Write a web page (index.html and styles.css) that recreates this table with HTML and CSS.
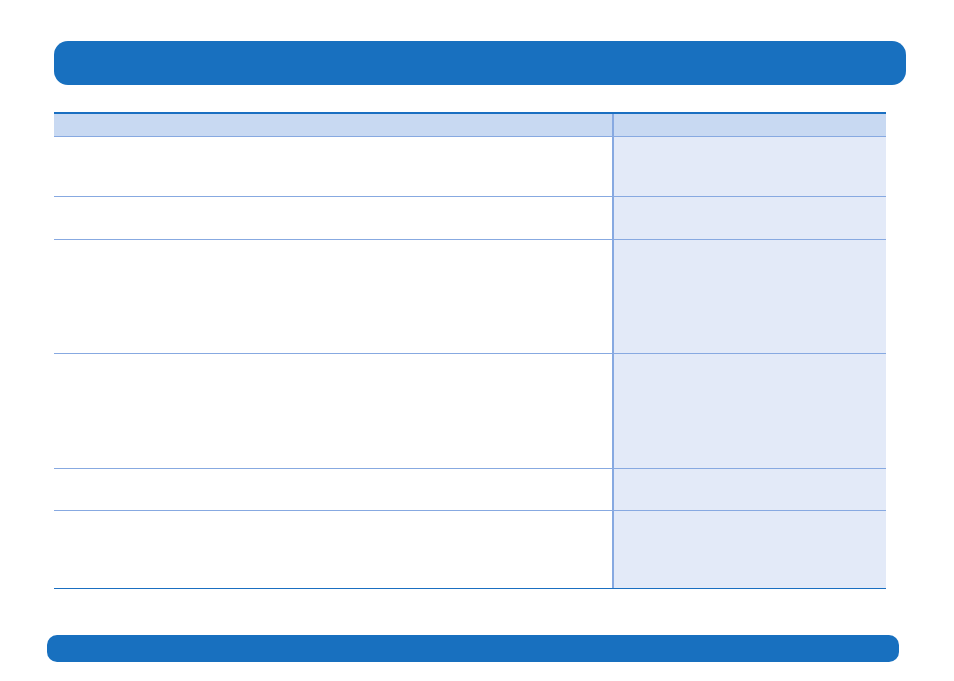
FILE: index.html
```html
<!DOCTYPE html>
<html lang="en">
<head>
<meta charset="utf-8">
<title>Table</title>
<link rel="stylesheet" href="styles.css">
</head>
<body>
<div class="page">
  <header class="top-bar"></header>
  <div class="table">
    <div class="row head"><div class="cell main"></div><div class="cell side"></div></div>
    <div class="row r1"><div class="cell main"></div><div class="cell side"></div></div>
    <div class="row r2"><div class="cell main"></div><div class="cell side"></div></div>
    <div class="row r3"><div class="cell main"></div><div class="cell side"></div></div>
    <div class="row r4"><div class="cell main"></div><div class="cell side"></div></div>
    <div class="row r5"><div class="cell main"></div><div class="cell side"></div></div>
    <div class="row r6 last"><div class="cell main"></div><div class="cell side"></div></div>
  </div>
  <footer class="bottom-bar"></footer>
</div>
</body>
</html>
```
FILE: styles.css
```css
html, body {
  margin: 0;
  padding: 0;
  background: #ffffff;
  font-family: "Liberation Sans", Arial, sans-serif;
}
.page {
  width: 954px;
  height: 681px;
  display: flex;
  flex-direction: column;
}
.top-bar {
  margin: 41px 0 0 54px;
  width: 852px;
  height: 44px;
  background: #1870bf;
  border-radius: 14px;
}
.table {
  margin: 27px 0 0 54px;
  width: 832px;
  border-top: 2px solid #1a6fc1;
  display: flex;
  flex-direction: column;
}
.row {
  display: flex;
  border-bottom: 1px solid #87a9e1;
}
.row.last {
  border-bottom: 1px solid #1a6fc1;
}
.cell.main {
  width: 558px;
  background: #ffffff;
}
.cell.side {
  flex: 1;
  border-left: 2px solid #87a9e1;
  background: #e3eaf8;
}
.row.head .cell.main,
.row.head .cell.side {
  background: #c8d9f2;
}
.head { height: 22px; }
.r1 { height: 59px; }
.r2 { height: 42px; }
.r3 { height: 113px; }
.r4 { height: 114px; }
.r5 { height: 41px; }
.r6 { height: 77px; }
.bottom-bar {
  margin: 46px 0 0 47px;
  width: 852px;
  height: 27px;
  background: #1870bf;
  border-radius: 10px;
}
```
